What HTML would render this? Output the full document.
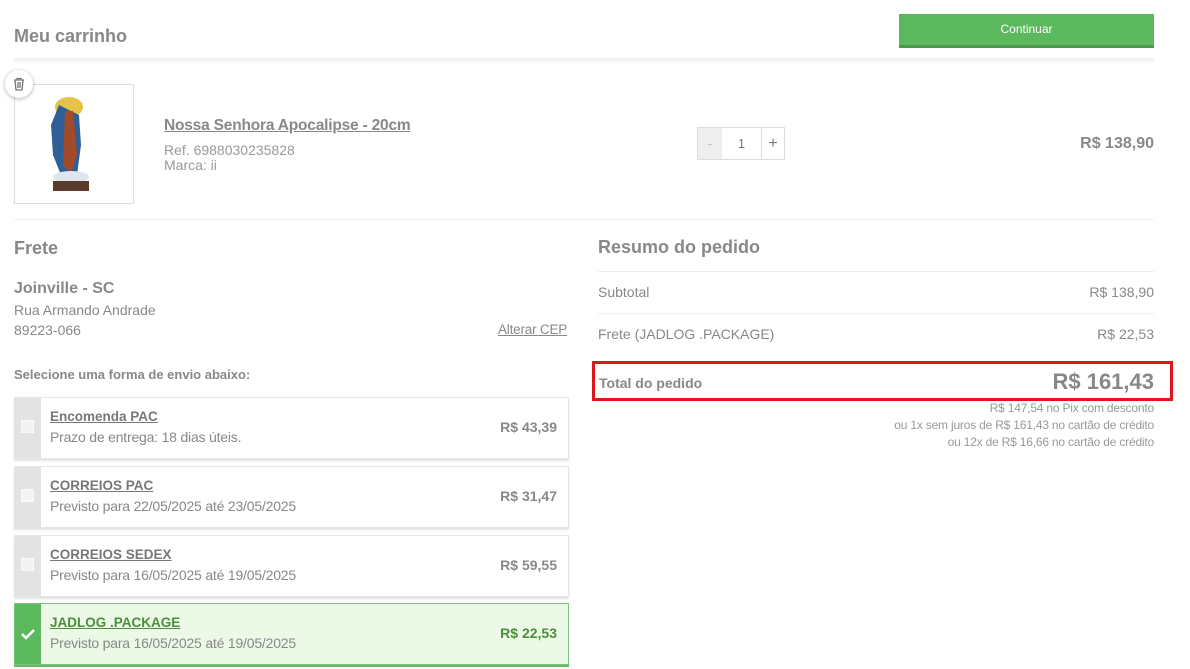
<!DOCTYPE html>
<html><head><meta charset="utf-8"><style>
*{margin:0;padding:0;box-sizing:border-box}
body{width:1190px;height:668px;overflow:hidden;background:#fff;font-family:"Liberation Sans",sans-serif;color:#777;position:relative}
.a{position:absolute}
.opt{position:absolute;left:14px;width:555px;height:62px;border:1px solid #e6e6e6;background:#fff;box-shadow:0 2px 2px #e2e2e2}
.opt .s{position:absolute;left:0;top:0;bottom:0;width:26px;background:#e3e3e3}
.opt .s i{position:absolute;left:6px;top:22px;width:13px;height:13px;background:#f3f3f3;border:1px solid #fafafa}
.opt .t{position:absolute;left:35px;top:11px;font-size:13.5px;font-weight:bold;color:#777;text-decoration:underline}
.opt .d{position:absolute;left:35px;top:31px;font-size:14px;color:#888;letter-spacing:-0.2px}
.opt .p{position:absolute;right:11px;top:21px;font-size:14px;font-weight:bold;color:#888}
.row{position:absolute;left:598px;width:556px;border-top:1px solid #eee;font-size:14px;color:#888}
</style></head><body>
<div class="a" style="left:14px;top:26px;font-size:18px;font-weight:bold;color:#888">Meu carrinho</div>
<div class="a" style="left:899px;top:14px;width:255px;height:34px;background:#5cb85c;border-bottom:3px solid #4a9a4a;color:#fff;font-size:12px;text-align:center;line-height:31px">Continuar</div>
<div class="a" style="left:14px;top:58px;width:1140px;height:6px;background:linear-gradient(#eee,#fff)"></div>
<div class="a" style="left:14px;top:84px;width:120px;height:120px;border:1px solid #ddd;background:#fff">
<svg width="118" height="118" viewBox="0 0 118 118"><ellipse cx="54" cy="22" rx="14" ry="10" fill="#e6c24a"/><path d="M44 20 L36 40 L38 70 L46 90 L62 90 L66 60 L64 30 Z" fill="#2f5f96"/><path d="M50 26 L58 26 L62 70 L56 88 L48 80 Z" fill="#a34a2a"/><ellipse cx="56" cy="92" rx="18" ry="6" fill="#dde6ee"/><rect x="38" y="96" width="36" height="10" fill="#5a3b2a"/></svg></div>
<div class="a" style="left:5px;top:70px;width:28px;height:28px;border-radius:50%;background:#fff;box-shadow:0 1px 4px rgba(0,0,0,.3);text-align:center">
<svg width="16" height="16" viewBox="0 0 16 16" style="margin-top:6px"><path d="M3 4h10M6 4V2.5h4V4M4 4l1 10h6l1-10M7 6v6M9 6v6" fill="none" stroke="#777" stroke-width="1.3"/></svg></div>
<div class="a" style="left:164px;top:117px;font-size:15.5px;font-weight:bold;color:#888;text-decoration:underline;letter-spacing:-0.2px">Nossa Senhora Apocalipse - 20cm</div>
<div class="a" style="left:164px;top:143px;font-size:14px;color:#999;line-height:15px">Ref. 6988030235828<br>Marca: ii</div>
<div class="a" style="left:697px;top:127px;width:88px;height:33px;border:1px solid #ddd;background:#fff;font-size:13px;color:#777">
<div class="a" style="left:0;top:0;width:24px;height:31px;background:#eee;text-align:center;line-height:31px;color:#bbb">-</div>
<div class="a" style="left:24px;top:0;width:39px;height:31px;text-align:center;line-height:31px">1</div>
<div class="a" style="left:63px;top:0;width:23px;height:31px;border-left:1px solid #ddd;text-align:center;line-height:31px;font-size:16px">+</div></div>
<div class="a" style="right:36px;top:135px;font-size:16px;font-weight:bold;color:#888">R$ 138,90</div>
<div class="a" style="left:14px;top:219px;width:1140px;border-top:1px solid #eee"></div>
<div class="a" style="left:14px;top:238px;font-size:18px;font-weight:bold;color:#888">Frete</div>
<div class="a" style="left:14px;top:280px;font-size:16px;font-weight:bold;color:#888">Joinville - SC</div>
<div class="a" style="left:14px;top:300px;font-size:14px;color:#888;line-height:20px">Rua Armando Andrade<br>89223-066</div>
<div class="a" style="left:498px;top:322px;font-size:13.5px;color:#888;text-decoration:underline;letter-spacing:-0.2px">Alterar CEP</div>
<div class="a" style="left:14px;top:367px;font-size:13px;font-weight:bold;color:#888">Selecione uma forma de envio abaixo:</div>
<div class="opt" style="top:397px"><div class="s"><i></i></div><div class="t">Encomenda PAC</div><div class="d">Prazo de entrega: 18 dias úteis.</div><div class="p">R$ 43,39</div></div>
<div class="opt" style="top:466px"><div class="s"><i></i></div><div class="t">CORREIOS PAC</div><div class="d">Previsto para 22/05/2025 até 23/05/2025</div><div class="p">R$ 31,47</div></div>
<div class="opt" style="top:535px"><div class="s"><i></i></div><div class="t">CORREIOS SEDEX</div><div class="d">Previsto para 16/05/2025 até 19/05/2025</div><div class="p">R$ 59,55</div></div>
<div class="opt" style="top:603px;background:#ebf9e6;border-color:#7ac47a;box-shadow:0 2px 0 #6cb86c"><div class="s" style="background:#5cb85c"><svg width="26" height="60" viewBox="0 0 26 60"><path d="M7 30l4 4 8-8" fill="none" stroke="#fff" stroke-width="2.5"/></svg></div><div class="t" style="color:#4a8f3a">JADLOG .PACKAGE</div><div class="d">Previsto para 16/05/2025 até 19/05/2025</div><div class="p" style="color:#4a8f3a">R$ 22,53</div></div>
<div class="a" style="left:598px;top:237px;font-size:18px;font-weight:bold;color:#888">Resumo do pedido</div>
<div class="row" style="top:271px;height:42px"><span class="a" style="left:0;top:12px">Subtotal</span><span class="a" style="right:0;top:12px">R$ 138,90</span></div>
<div class="row" style="top:313px;height:42px"><span class="a" style="left:0;top:12px">Frete (JADLOG .PACKAGE)</span><span class="a" style="right:0;top:12px">R$ 22,53</span></div>
<div class="a" style="left:592px;top:361px;width:581px;height:40px;border:3px solid #e0161e"></div>
<div class="a" style="left:599px;top:375px;font-size:14px;font-weight:bold;color:#888">Total do pedido</div>
<div class="a" style="right:36px;top:369px;font-size:22px;font-weight:bold;color:#888">R$ 161,43</div>
<div class="a" style="right:36px;top:400px;font-size:12px;color:#999;text-align:right;line-height:17px;letter-spacing:-0.2px">R$ 147,54 no Pix com desconto<br>ou 1x sem juros de R$ 161,43 no cartão de crédito<br>ou 12x de R$ 16,66 no cartão de crédito</div>
</body></html>
